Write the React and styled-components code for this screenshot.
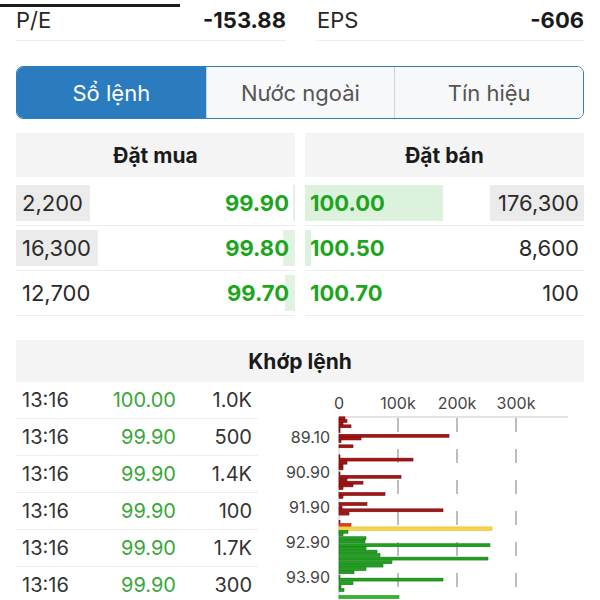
import React from 'react'
import styled, { createGlobalStyle } from 'styled-components'

const GlobalStyle = createGlobalStyle`
  body {
    margin: 0;
    background: #fff;
    font-family: Inter, "Noto Sans", "Liberation Sans", sans-serif;
    color: #222;
  }
`

const Page = styled.div`
  width: 600px;
  height: 600px;
  overflow: hidden;
  box-sizing: border-box;
  padding: 0 16px;
`

const TopRule = styled.div`
  width: 180px;
  height: 3px;
  margin: 4px 0 0 -16px;
  background: #1c1c1c;
`

const StatsGrid = styled.div`
  display: grid;
  grid-template-columns: 270px 1fr;
  column-gap: 31px;
`

const StatCell = styled.div`
  display: flex;
  justify-content: space-between;
  align-items: center;
  height: 26px;
  padding-bottom: 7px;
  border-bottom: 1px solid #ededed;
  font-size: 22px;
  line-height: 26px;
`

const StatLabel = styled.span`
  color: #262626;
`

const StatValue = styled.span`
  font-weight: 700;
  color: #1a1a1a;
`

const Segmented = styled.div`
  display: grid;
  grid-template-columns: repeat(3, 1fr);
  height: 53px;
  margin-top: 25px;
  box-sizing: border-box;
  border: 1.5px solid #2f7fbf;
  border-radius: 7px;
  overflow: hidden;
`

const Segment = styled.div`
  display: flex;
  align-items: center;
  justify-content: center;
  font-size: 22px;
  color: ${p => (p.$active ? '#fff' : '#555')};
  background: ${p => (p.$active ? '#2b7bbf' : '#f7f8fa')};
  & + & {
    border-left: 1px solid #cdd4db;
  }
`

const Book = styled.div`
  display: grid;
  grid-template-columns: 1fr 1fr;
  column-gap: 10px;
  margin-top: 14px;
`

const SideHeader = styled.div`
  height: 44px;
  display: flex;
  align-items: center;
  justify-content: center;
  background: #f4f4f4;
  font-size: 21px;
  font-weight: 700;
  color: #1a1a1a;
  margin-bottom: 4px;
`

const BookRow = styled.div`
  display: flex;
  align-items: center;
  justify-content: space-between;
  height: 45px;
  box-sizing: border-box;
  border-bottom: 1px solid #ececec;
  background-repeat: no-repeat;
  background-position: ${p => (p.$side === 'bid' ? 'right center' : 'left center')};
  font-size: 22px;
`

const Qty = styled.span`
  height: 36px;
  line-height: 36px;
  padding: ${p => (p.$side === 'bid' ? '0 7px 0 6px' : '0 5px 0 8px')};
  background: ${p => (p.$flash ? '#ebebeb' : 'transparent')};
  color: #2a2a2a;
`

const Price = styled.span`
  font-weight: 700;
  color: #1ea51e;
  padding: ${p => (p.$side === 'bid' ? '0 6px 0 0' : '0 0 0 5px')};
`

const SectionHeader = styled.div`
  height: 42px;
  margin-top: 24px;
  display: flex;
  align-items: center;
  justify-content: center;
  background: #f4f4f4;
  font-size: 21px;
  font-weight: 700;
  color: #1a1a1a;
`

const MatchArea = styled.div`
  display: flex;
  align-items: flex-start;
`

const TradeList = styled.div`
  width: 242px;
  flex-shrink: 0;
`

const TradeRow = styled.div`
  display: grid;
  grid-template-columns: 64px 90px 76px;
  align-items: center;
  height: 37px;
  box-sizing: border-box;
  padding-left: 6px;
  border-bottom: 1px solid #eeeeee;
  font-size: 20px;
  color: #333;
`

const TradePrice = styled.span`
  text-align: right;
  color: #39a639;
`

const TradeVol = styled.span`
  text-align: right;
`

const Chart = styled.svg`
  display: block;
  flex-shrink: 0;
  margin-left: 22px;
  font-family: Inter, "Noto Sans", sans-serif;
`

const bids = [
  { qty: '2,200', price: '99.90', flash: true, depth: 2 },
  { qty: '16,300', price: '99.80', flash: true, depth: 12 },
  { qty: '12,700', price: '99.70', flash: false, depth: 10 },
]

const asks = [
  { qty: '176,300', price: '100.00', flash: true, depth: 138 },
  { qty: '8,600', price: '100.50', flash: false, depth: 6 },
  { qty: '100', price: '100.70', flash: false, depth: 0 },
]

const trades = [
  ['13:16', '100.00', '1.0K'],
  ['13:16', '99.90', '500'],
  ['13:16', '99.90', '1.4K'],
  ['13:16', '99.90', '100'],
  ['13:16', '99.90', '1.7K'],
  ['13:16', '99.90', '300'],
]

// [y in page px, bar length px, kind]
const bars = [
  [418.3, 6, 'r'], [421, 8, 'r'], [423.5, 4, 'r'], [426.3, 12, 'r'], [428.8, 1, 'r'],
  [431.3, 1, 'r'], [435.8, 110, 'r'], [438.5, 22, 'r'], [441.2, 2, 'r'], [446.3, 14, 'r'],
  [456.3, 1, 'r'], [459.6, 74, 'r'], [462.7, 8, 'r'], [465.6, 4, 'r'], [468.4, 4, 'r'],
  [473.4, 1, 'r'], [476.8, 62, 'r'], [479.9, 8, 'r'], [482.7, 24, 'r'], [485.4, 14, 'r'],
  [488.1, 4, 'r'], [494, 46, 'r'], [496.8, 4, 'r'], [504, 28, 'r'], [507.5, 3, 'r'],
  [510.3, 104, 'r'], [513.6, 10, 'r'], [521.8, 1, 'r'], [525, 12, 'o'],
  [528.7, 153, 'y'],
  [531.8, 9, 'g'], [534.5, 4, 'g'], [538.2, 27, 'g'], [541.5, 26, 'g'], [545.2, 151, 'g'],
  [548.3, 27, 'g'], [551.6, 38, 'g'], [555, 41, 'g'], [558.6, 149, 'g'], [562.2, 53, 'g'],
  [565.6, 44, 'g'], [569, 27, 'g'], [572.3, 15, 'g'], [576.5, 1, 'g'], [579.6, 104, 'g'],
  [583.2, 14, 'g'], [586.6, 2, 'g'], [590, 5, 'g'], [597, 60, 'l'],
]

const barColors = {
  r: ['#a81414', '#6e0808'],
  o: ['#d9401c', '#a8230d'],
  y: ['#f6d34c', '#e9bf2a'],
  g: ['#1fa31f', '#137313'],
  l: ['#2fb52f', '#1f8f1f'],
}

const CHART_TOP = 382
const X0 = 59
const ticks = [
  { x: 59, label: '0' },
  { x: 118, label: '100k' },
  { x: 177, label: '200k' },
  { x: 236, label: '300k' },
]
const levels = [
  [439, '89.10'],
  [474, '90.90'],
  [509, '91.90'],
  [544, '92.90'],
  [579, '93.90'],
]

const VolumeChart = () => (
  <Chart width="304" height="222" viewBox="0 0 304 222">
    {ticks.map(t => (
      <text key={t.label} x={t.x} y="23" textAnchor="middle" dominantBaseline="middle" fontSize="16" fill="#444">
        {t.label}
      </text>
    ))}
    <line x1={X0} y1="35" x2="288" y2="35" stroke="#c8c8c8" strokeWidth="1.2" />
    <line x1={X0} y1="35" x2={X0} y2="222" stroke="#c8c8c8" strokeWidth="1" />
    {ticks.slice(1).map(t => (
      <line key={t.label} x1={t.x} y1="36" x2={t.x} y2="222" stroke="#a8a8a8" strokeWidth="1.5" strokeDasharray="14 17" />
    ))}
    {levels.map(([y, label]) => (
      <text key={label} x="50" y={y - CHART_TOP} textAnchor="end" dominantBaseline="middle" fontSize="16" fill="#444">
        {label}
      </text>
    ))}
    {bars.map(([y, w, k], i) => {
      const h = k === 'y' ? 3.6 : 2.9
      return (
        <rect
          key={i}
          x={X0}
          y={y - CHART_TOP - h / 2}
          width={Math.max(w, 1)}
          height={h}
          fill={barColors[k][0]}
          stroke={barColors[k][1]}
          strokeWidth="0.6"
        />
      )
    })}
  </Chart>
)

const depthStyle = (w, color) =>
  w > 0
    ? { backgroundImage: `linear-gradient(${color}, ${color})`, backgroundSize: `${w}px 36px` }
    : undefined

export default function App() {
  return (
    <>
      <GlobalStyle />
      <Page>
        <TopRule />
        <StatsGrid>
          <StatCell>
            <StatLabel>P/E</StatLabel>
            <StatValue>-153.88</StatValue>
          </StatCell>
          <StatCell>
            <StatLabel>EPS</StatLabel>
            <StatValue>-606</StatValue>
          </StatCell>
        </StatsGrid>

        <Segmented>
          <Segment $active>Sổ lệnh</Segment>
          <Segment>Nước ngoài</Segment>
          <Segment>Tín hiệu</Segment>
        </Segmented>

        <Book>
          <div>
            <SideHeader>Đặt mua</SideHeader>
            {bids.map(r => (
              <BookRow key={r.price} $side="bid" style={depthStyle(r.depth, '#e1f2e1')}>
                <Qty $side="bid" $flash={r.flash}>{r.qty}</Qty>
                <Price $side="bid">{r.price}</Price>
              </BookRow>
            ))}
          </div>
          <div>
            <SideHeader>Đặt bán</SideHeader>
            {asks.map(r => (
              <BookRow key={r.price} $side="ask" style={depthStyle(r.depth, '#ddf2dd')}>
                <Price $side="ask">{r.price}</Price>
                <Qty $side="ask" $flash={r.flash}>{r.qty}</Qty>
              </BookRow>
            ))}
          </div>
        </Book>

        <SectionHeader>Khớp lệnh</SectionHeader>
        <MatchArea>
          <TradeList>
            {trades.map(([t, p, v], i) => (
              <TradeRow key={i}>
                <span>{t}</span>
                <TradePrice>{p}</TradePrice>
                <TradeVol>{v}</TradeVol>
              </TradeRow>
            ))}
          </TradeList>
          <VolumeChart />
        </MatchArea>
      </Page>
    </>
  )
}
